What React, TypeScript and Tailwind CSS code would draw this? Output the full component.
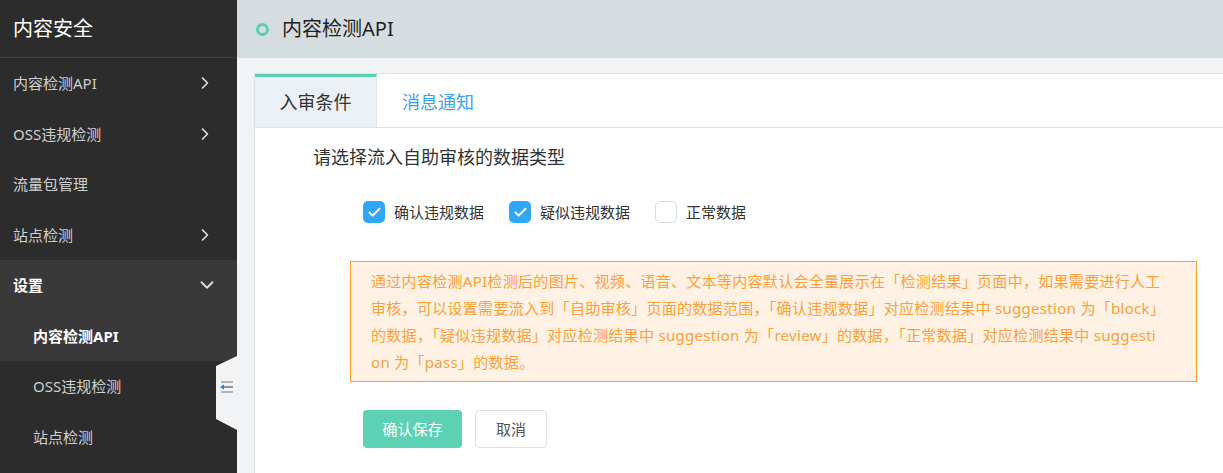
import React, { useState } from "react";
import { ChevronRight, ChevronDown, Check } from "lucide-react";

const font = { fontFamily: '"Noto Sans", "Noto Sans CJK SC", sans-serif' };

type Item = { label: string; arrow?: "right" | "down"; sub?: boolean; active?: boolean; open?: boolean };

const menu: Item[] = [
  { label: "内容检测API", arrow: "right" },
  { label: "OSS违规检测", arrow: "right" },
  { label: "流量包管理" },
  { label: "站点检测", arrow: "right" },
  { label: "设置", arrow: "down", open: true },
  { label: "内容检测API", sub: true, active: true },
  { label: "OSS违规检测", sub: true },
  { label: "站点检测", sub: true },
];

const notice = [
  "通过内容检测API检测后的图片、视频、语音、文本等内容默认会全量展示在「检测结果」页面中，如果需要进行人工",
  "审核，可以设置需要流入到「自助审核」页面的数据范围，「确认违规数据」对应检测结果中 suggestion 为「block」",
  "的数据，「疑似违规数据」对应检测结果中 suggestion 为「review」的数据，「正常数据」对应检测结果中 suggesti",
  "on 为「pass」的数据。",
];

function Box({ checked, label, onClick }: { checked: boolean; label: string; onClick: () => void }) {
  return (
    <label className="flex items-center gap-[9px] cursor-pointer" onClick={onClick}>
      <span
        className={`w-[22px] h-[22px] rounded-[5px] flex items-center justify-center ${
          checked ? "bg-[#2ea7f7]" : "bg-white border border-[#d3dce5]"
        }`}
      >
        {checked && <Check size={15} strokeWidth={3.2} color="#fff" />}
      </span>
      <span className="text-[15px] text-[#333] leading-[22px]">{label}</span>
    </label>
  );
}

export default function App() {
  const [tab, setTab] = useState(0);
  const [checks, setChecks] = useState([true, true, false]);
  const toggle = (i: number) => setChecks(c => c.map((v, j) => (j === i ? !v : v)));

  return (
    <div className="flex w-[1223px] h-[473px] overflow-hidden" style={font}>
      {/* sidebar */}
      <aside className="relative w-[237px] flex-shrink-0 bg-[#2c2c2c] flex flex-col">
        <div className="h-[58px] flex items-center px-[13px] text-white text-[20px] border-b border-[#3d3d3d] flex-shrink-0">
          内容安全
        </div>
        {menu.map((m, i) => (
          <div
            key={i}
            className={`h-[50.5px] flex-shrink-0 flex items-center justify-between pr-[22px] text-[15px] ${
              m.sub ? "pl-[33px]" : "pl-[13px]"
            } ${m.open || m.active ? "bg-[#393939] text-white font-bold" : "text-[#cfcfcf]"}`}
          >
            <span>{m.label}</span>
            {m.arrow === "right" && <ChevronRight size={20} color="#e0e0e0" strokeWidth={2} />}
            {m.arrow === "down" && <ChevronDown size={22} color="#e0e0e0" strokeWidth={2} className="-mr-[3px]" />}
          </div>
        ))}
        {/* collapse handle */}
        <div className="absolute right-0 top-[356px] w-[21px] h-[74px]">
          <svg width="21" height="74" viewBox="0 0 21 74">
            <polygon points="21,0 21,74 0,63 0,10" fill="#f2f3f5" />
            <line x1="5" y1="26" x2="17" y2="26" stroke="#8a8a8a" strokeWidth="1.2" />
            <line x1="7" y1="31" x2="17" y2="31" stroke="#6d7f93" strokeWidth="1.6" />
            <polygon points="4,31 8,28.5 8,33.5" fill="#2e7ad1" />
            <line x1="5" y1="36" x2="17" y2="36" stroke="#8a8a8a" strokeWidth="1.2" />
          </svg>
        </div>
      </aside>

      {/* main */}
      <main className="flex-1 flex flex-col bg-[#f2f3f5] min-w-0">
        <header className="h-[58px] flex-shrink-0 bg-[#d6dde0] flex items-center pl-[19px] gap-[13px]">
          <span className="w-[13px] h-[13px] rounded-full border-[3px] border-[#5ccfb0]" />
          <h1 className="text-[20px] text-[#222]">内容检测API</h1>
        </header>

        <div className="flex-1 pt-[15px] pl-[17px]">
          <div className="h-full bg-white border-l border-t border-[#dde3e8] -mr-[10px]">
            <div className="h-[54px] flex border-b border-[#dde3e8]">
              {["入审条件", "消息通知"].map((t, i) => (
                <button
                  key={t}
                  onClick={() => setTab(i)}
                  className={`w-[122px] text-[18px] flex items-center justify-center ${
                    tab === i
                      ? "bg-[#ebf0f4] text-[#333] border-t-[3px] border-[#5ccfb3] border-r border-r-[#dde3e8]"
                      : "text-[#3ea2f2] pt-[3px]"
                  }`}
                >
                  {t}
                </button>
              ))}
            </div>

            <div className="pl-[58px] pt-[17px]">
              <p className="text-[18px] text-[#333] leading-[24px]">请选择流入自助审核的数据类型</p>

              <div className="flex gap-[25px] mt-[32px] pl-[50px]">
                <Box checked={checks[0]} label="确认违规数据" onClick={() => toggle(0)} />
                <Box checked={checks[1]} label="疑似违规数据" onClick={() => toggle(1)} />
                <Box checked={checks[2]} label="正常数据" onClick={() => toggle(2)} />
              </div>

              <div className="ml-[37px] mt-[38px] w-[847px] h-[121px] bg-[#fff2e5] border border-[#f7a12b] pl-[20px] pt-[6px] text-[15px] leading-[27px] tracking-[0.3px] text-[#f6a13a]">
                {notice.map((l, i) => (
                  <div key={i} className="whitespace-nowrap">{l}</div>
                ))}
              </div>

              <div className="flex gap-[13px] mt-[28px] pl-[50px]">
                <button className="w-[99px] h-[38px] rounded-[4px] bg-[#5dd1b3] text-white text-[15px]">确认保存</button>
                <button className="w-[72px] h-[38px] rounded-[4px] bg-white border border-[#d9e1e8] text-[#555] text-[15px]">
                  取消
                </button>
              </div>
            </div>
          </div>
        </div>
      </main>
    </div>
  );
}
